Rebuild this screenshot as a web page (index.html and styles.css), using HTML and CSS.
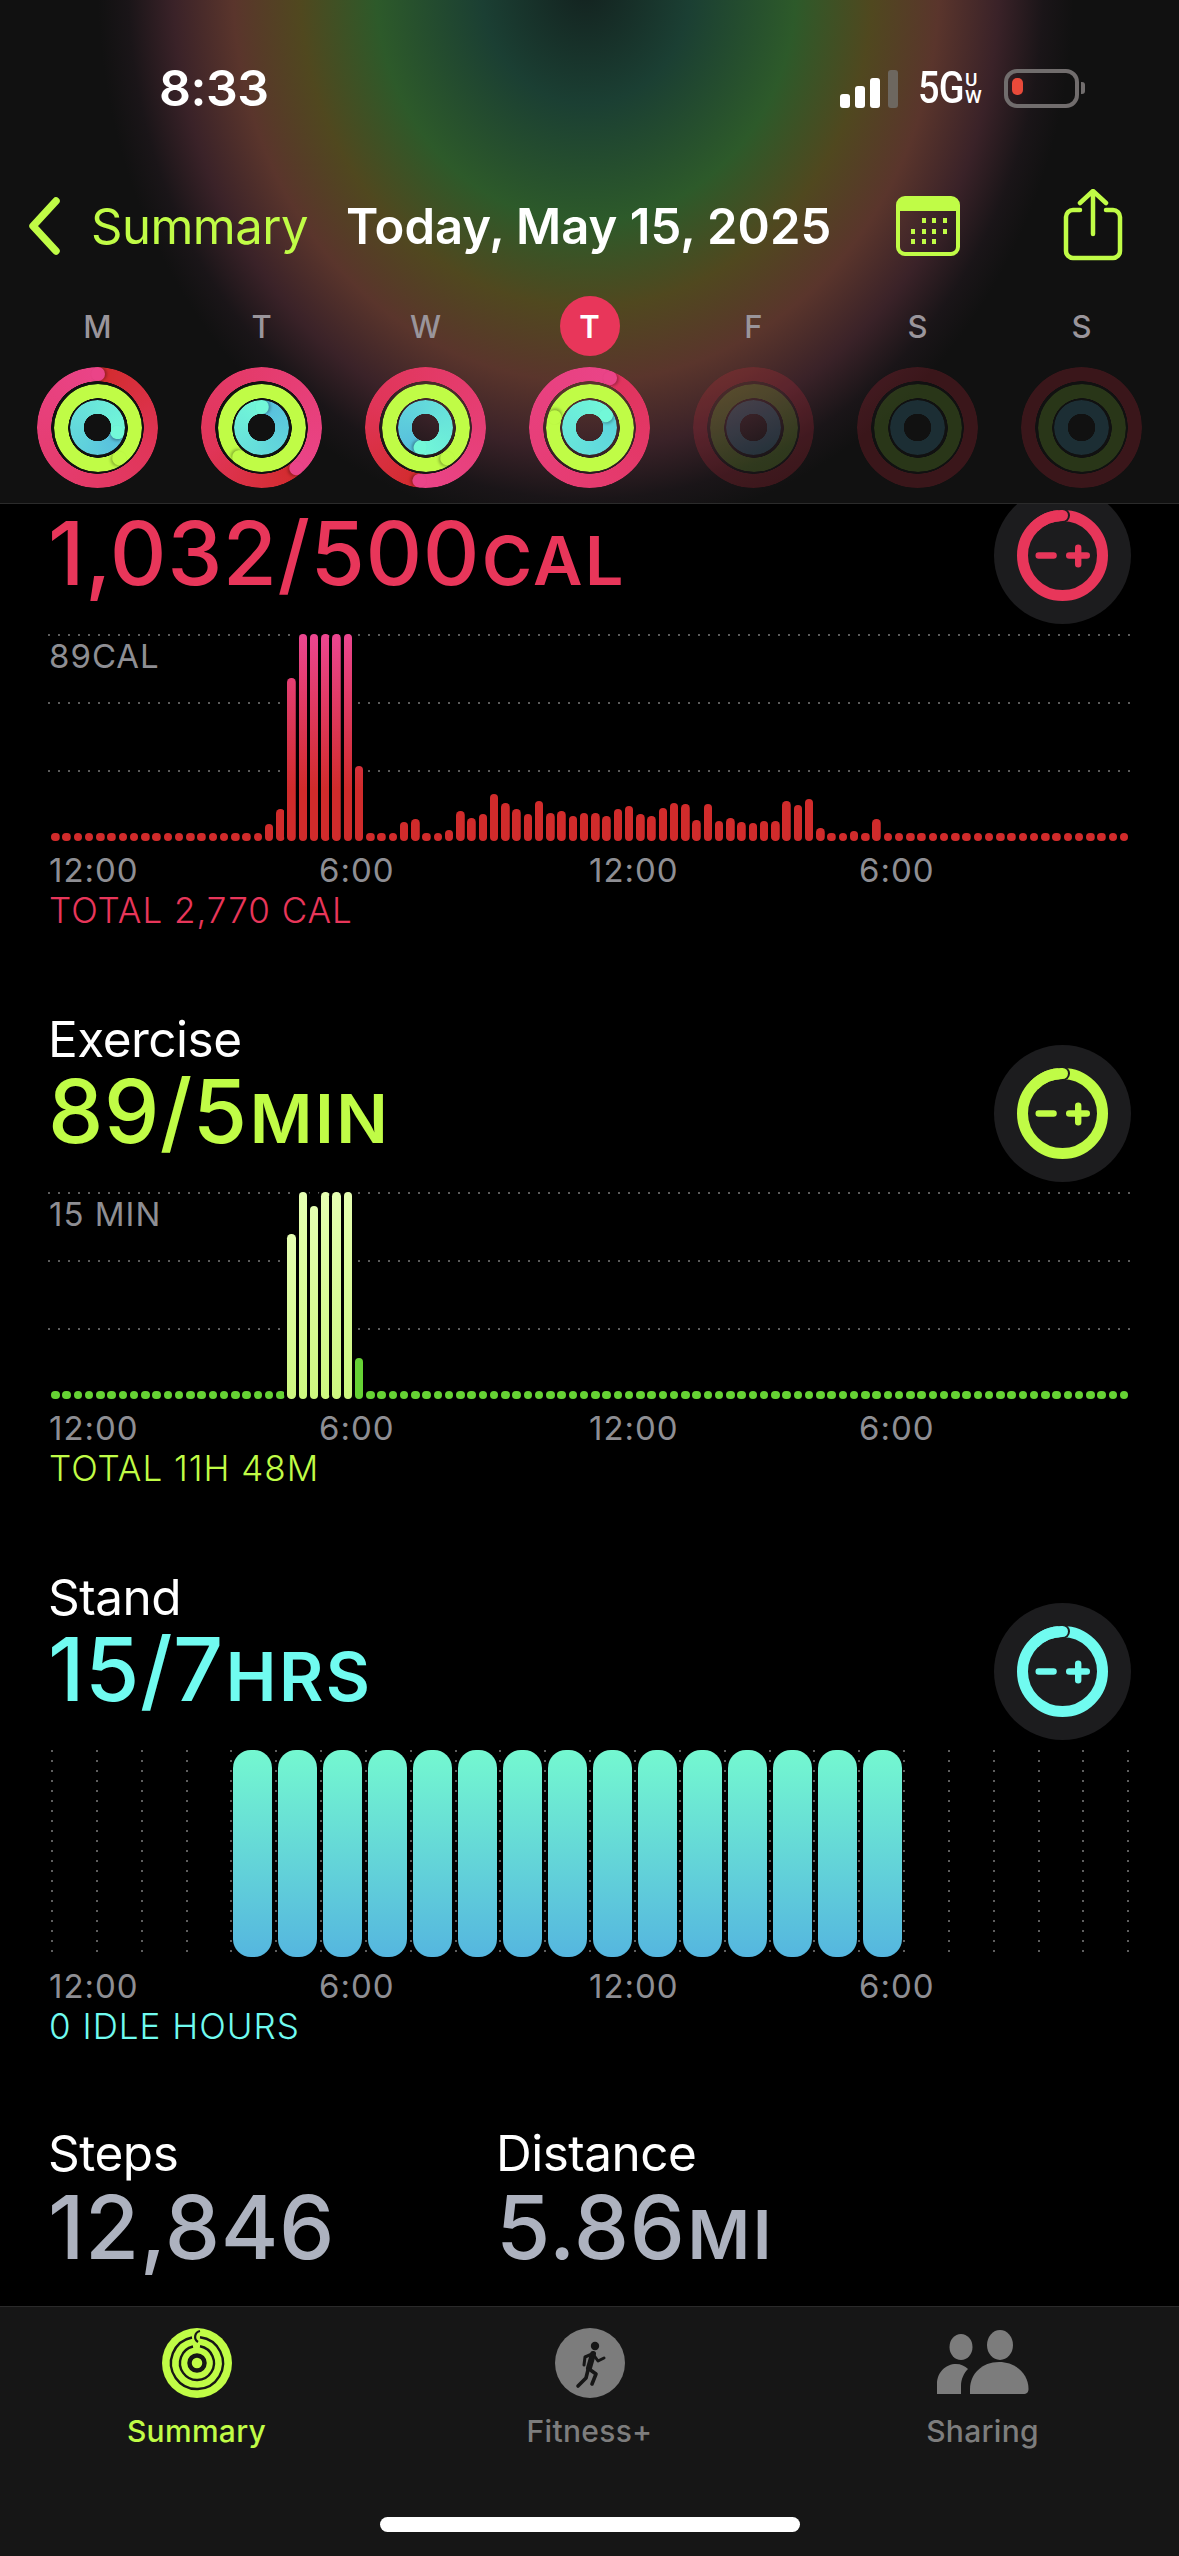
FILE: index.html
```html
<!DOCTYPE html>
<html lang="en">

<head>
    <meta charset="UTF-8">
    <meta name="viewport" content="width=device-width, initial-scale=1.0">
    <title>Activity Summary</title>
    <link rel="stylesheet" href="styles.css">
</head>

<body>
    <svg class="sprites" width="0" height="0">
        <symbol id="goal-button" viewBox="0 0 137 137">
            <circle cx="68.5" cy="68.5" r="68.5" fill="#1c1c1e" />
            <circle cx="68.5" cy="68.5" r="40" fill="none" stroke="currentColor" stroke-width="11" />
            <circle cx="69" cy="28.5" r="7" fill="#1c1c1e" />
            <path d="M40.2 40.3A40 40 0 0 1 68.5 28.5" fill="none" stroke="currentColor" stroke-width="11" />
            <circle cx="68.5" cy="28.5" r="5.5" fill="currentColor" />
            <path d="M44.7 68.5H59.6M75.2 68.5H92.8M84.2 60.7V77.3" fill="none" stroke="currentColor" stroke-width="6.4" stroke-linecap="round" />
        </symbol>
    </svg>

    <header class="top">
        <div class="status">
            <span class="time">8:33</span>
            <div class="status-icons">
                <div class="signal">
                    <i class="sig sig-1"></i>
                    <i class="sig sig-2"></i>
                    <i class="sig sig-3"></i>
                    <i class="sig sig-4"></i>
                </div>
                <div class="network">
                    <span class="net-5g">5G</span>
                    <span class="net-uw"><b>U</b><b>W</b></span>
                </div>
                <div class="battery"><i class="battery-level"></i></div>
                <i class="battery-nub"></i>
            </div>
        </div>

        <nav class="nav">
            <svg class="chevron" width="34" height="58" viewBox="0 0 34 58">
                <path d="M29 4L6 29L29 54" fill="none" stroke="#c0fc46" stroke-width="7.5" stroke-linecap="round" stroke-linejoin="round" />
            </svg>
            <span class="nav-back">Summary</span>
            <h1 class="nav-title">Today, May 15, 2025</h1>
            <svg class="calendar" width="64" height="60" viewBox="0 0 64 60">
                <rect x="2" y="2" width="60" height="56" rx="7" fill="none" stroke="#c0fc46" stroke-width="4" />
                <path d="M2 15V8a6 6 0 0 1 6-6H56a6 6 0 0 1 6 6V15Z" fill="#c0fc46" />
                <g fill="#c0fc46">
                    <rect x="26" y="22" width="4" height="5" /><rect x="36" y="22" width="4" height="5" /><rect x="47" y="22" width="4" height="5" />
                    <rect x="15" y="33" width="4" height="5" /><rect x="26" y="33" width="4" height="5" /><rect x="36" y="33" width="4" height="5" /><rect x="47" y="33" width="4" height="5" />
                    <rect x="15" y="43" width="4" height="5" /><rect x="26" y="43" width="4" height="5" /><rect x="36" y="43" width="4" height="5" />
                </g>
            </svg>
            <svg class="share" width="60" height="72" viewBox="0 0 60 72">
                <path d="M17 21H10a7 7 0 0 0-7 7V62a7 7 0 0 0 7 7H50a7 7 0 0 0 7-7V28a7 7 0 0 0-7-7H43" fill="none" stroke="#c0fc46" stroke-width="4.5" stroke-linecap="round" />
                <path d="M30 45V3M17 14L30 2L43 14" fill="none" stroke="#c0fc46" stroke-width="4.5" stroke-linecap="round" stroke-linejoin="round" />
            </svg>
        </nav>

        <div class="week" id="week"></div>
    </header>

    <main class="content">
        <div class="scroller">
            <section class="metric metric-move">
                <div class="metric-head">
                    <div>
                        <h2 class="metric-title metric-title-under">Move</h2>
                        <p class="metric-value">1,032/500<span class="unit">CAL</span></p>
                    </div>
                    <svg class="goal-button"><use href="#goal-button" /></svg>
                </div>
                <div class="chart">
                    <div class="gridlines"><i></i><i></i><i></i></div>
                    <div class="bars" id="move-bars"></div>
                    <span class="chart-max">89CAL</span>
                </div>
                <div class="axis"><span>12:00</span><span>6:00</span><span>12:00</span><span>6:00</span></div>
                <p class="metric-total">TOTAL 2,770 CAL</p>
            </section>

            <section class="metric metric-exercise">
                <div class="metric-head">
                    <div>
                        <h2 class="metric-title">Exercise</h2>
                        <p class="metric-value">89/5<span class="unit">MIN</span></p>
                    </div>
                    <svg class="goal-button"><use href="#goal-button" /></svg>
                </div>
                <div class="chart">
                    <div class="gridlines"><i></i><i></i><i></i></div>
                    <div class="bars" id="exercise-bars"></div>
                    <span class="chart-max">15 MIN</span>
                </div>
                <div class="axis"><span>12:00</span><span>6:00</span><span>12:00</span><span>6:00</span></div>
                <p class="metric-total">TOTAL 11H 48M</p>
            </section>

            <section class="metric metric-stand">
                <div class="metric-head">
                    <div>
                        <h2 class="metric-title">Stand</h2>
                        <p class="metric-value">15/7<span class="unit">HRS</span></p>
                    </div>
                    <svg class="goal-button"><use href="#goal-button" /></svg>
                </div>
                <div class="chart">
                    <div class="stand-lines" id="stand-lines"></div>
                    <div class="stand-bars" id="stand-bars"></div>
                </div>
                <div class="axis"><span>12:00</span><span>6:00</span><span>12:00</span><span>6:00</span></div>
                <p class="metric-total">0 IDLE HOURS</p>
            </section>

            <section class="extras">
                <div class="extra extra-steps">
                    <h2 class="metric-title">Steps</h2>
                    <p class="metric-value">12,846</p>
                </div>
                <div class="extra">
                    <h2 class="metric-title">Distance</h2>
                    <p class="metric-value">5.86<span class="unit">MI</span></p>
                </div>
            </section>
        </div>
    </main>

    <footer class="tabbar">
        <div class="tabs">
            <div class="tab tab-active">
                <svg class="tab-icon" width="70" height="70" viewBox="0 0 70 70">
                    <circle cx="35" cy="35" r="35" fill="#c0fc46" />
                    <g fill="none" stroke="#161616" stroke-width="2.4">
                        <path d="M38 9.2A26 26 0 1 1 30 9.5" />
                        <path d="M38 18.3A17 17 0 1 1 31 18.5" />
                    </g>
                    <circle cx="35" cy="35" r="7.5" fill="none" stroke="#161616" stroke-width="4.5" />
                    <path d="M38 3A6 6 0 0 0 36 14" fill="none" stroke="#161616" stroke-width="2.2" />
                </svg>
                <span class="tab-label">Summary</span>
            </div>
            <div class="tab">
                <svg class="tab-icon" width="70" height="70" viewBox="0 0 70 70">
                    <circle cx="35" cy="35" r="35" fill="#7c7c7c" />
                    <circle cx="40" cy="18" r="4.2" fill="#161616" />
                    <g fill="none" stroke="#161616" stroke-linecap="round" stroke-linejoin="round">
                        <path d="M38 26L34 40" stroke-width="6" />
                        <path d="M37 26L30 29L29 37" stroke-width="3" />
                        <path d="M38 26L43 33L49 30" stroke-width="3" />
                        <path d="M34 41L41 46L37 56" stroke-width="3.6" />
                        <path d="M33 42L31 50L23 58" stroke-width="3.6" />
                    </g>
                </svg>
                <span class="tab-label">Fitness+</span>
            </div>
            <div class="tab">
                <svg class="tab-icon" width="94" height="70" viewBox="0 0 94 70">
                    <g fill="#7c7c7c">
                        <ellipse cx="25" cy="19" rx="11.500" ry="13" />
                        <ellipse cx="64" cy="17" rx="13" ry="15" />
                        <path d="M1 66V56C1 44 10 36 20 36C25 36 29 38 32 41C28 45 25 51 25 58V66Z" />
                        <path d="M35 68H88C92 68 93.500 66 93.500 63C93.500 48 81 36 64 36C47 36 35 48 35 63Z" transform="translate(-1 -2)" />
                    </g>
                </svg>
                <span class="tab-label">Sharing</span>
            </div>
        </div>
        <div class="home-indicator"></div>
    </footer>

    <script src="charts.js"></script>
</body>

</html>
```

FILE: styles.css
```css
* {
    box-sizing: border-box;
}

body {
    font-family: 'Inter', 'Noto Sans', sans-serif;
    background-color: #000;
    color: #fff;
    margin: 0;
    padding: 0;
    width: 1179px;
    height: 2556px;
    display: flex;
    flex-direction: column;
    overflow: hidden;
}

h1,
h2,
p {
    margin: 0;
    font-weight: 400;
}

.sprites {
    position: absolute;
}

/* top area */

.top {
    flex: none;
    position: relative;
    z-index: 1;
    height: 504px;
    border-bottom: 1px solid #2b2b2b;
    background-color: #111;
    background-image: radial-gradient(488px 547px at 586px -14px,
            #13221f 0%,
            #1b3f33 21.5%,
            #2d5a2a 43%,
            #50481f 58.6%,
            #5a352c 72.3%,
            #3a2228 84.6%,
            #1a1518 93.8%,
            #111 100%);
}

.status {
    height: 176px;
    display: flex;
    justify-content: space-between;
    align-items: center;
    padding: 0 94px 0 159px;
}

.time {
    font-size: 50px;
    font-weight: 600;
    letter-spacing: -0.5px;
}

.status-icons {
    display: flex;
    align-items: center;
}

.signal {
    display: flex;
    align-items: flex-end;
    gap: 5px;
    height: 39px;
}

.sig {
    width: 10px;
    background: #fff;
    border-radius: 3px;
}

.sig-1 {
    height: 14px;
}

.sig-2 {
    height: 22px;
}

.sig-3 {
    height: 30px;
}

.sig-4 {
    height: 38px;
    margin-left: 3px;
    background: #6d675f;
}

.network {
    display: flex;
    align-items: center;
    margin-left: 20px;
    width: 66px;
}

.net-5g {
    font-family: 'Roboto', sans-serif;
    font-size: 44px;
    font-weight: 500;
    letter-spacing: -1px;
    transform: scaleX(0.86);
    transform-origin: left center;
    width: 47px;
}

.net-uw {
    display: flex;
    flex-direction: column;
    font-family: 'Roboto', sans-serif;
    font-size: 19px;
    line-height: 17px;
}

.net-uw b {
    font-weight: 500;
}

.battery {
    width: 75px;
    height: 39px;
    margin-left: 20px;
    padding: 7px 5px;
    border: 4px solid #716d6d;
    border-radius: 13px;
}

.battery-level {
    display: block;
    width: 11px;
    height: 100%;
    margin-top: -2px;
    margin-left: -1px;
    padding-bottom: 4px;
    background: #ea4a3a;
    border-radius: 5px;
}

.battery-nub {
    width: 4px;
    height: 12px;
    margin-left: 2px;
    background: #716d6d;
    border-radius: 0 3px 3px 0;
}

.nav {
    height: 100px;
    display: flex;
    align-items: center;
    padding-left: 27px;
}

.nav-back {
    font-size: 49px;
    color: #c0fc46;
    margin-left: 30px;
    letter-spacing: -0.5px;
}

.nav-title {
    font-size: 49px;
    font-weight: 600;
    margin-left: 38px;
    white-space: nowrap;
}

.calendar {
    margin-left: auto;
}

.share {
    margin-left: 103px;
    margin-right: 56px;
    margin-top: -2px;
}

.week {
    display: grid;
    grid-template-columns: repeat(7, 164px);
    justify-content: center;
    margin-top: 20px;
}

.day {
    display: flex;
    flex-direction: column;
    align-items: center;
    gap: 11px;
}

.day-letter {
    width: 60px;
    height: 60px;
    display: flex;
    align-items: center;
    justify-content: center;
    border-radius: 50%;
    font-size: 31px;
    font-weight: 500;
    color: #9a959b;
}

.day-today .day-letter {
    background: #e8365a;
    color: #fff;
    font-weight: 600;
}

.ring {
    display: grid;
    place-items: center;
    width: 121px;
    height: 121px;
}

.band {
    --hole: 46.500px;
    grid-area: 1 / 1;
    position: relative;
    border-radius: 50%;
    background: conic-gradient(from var(--angle), var(--from) 0%, var(--via) 30%, var(--to) 100%);
    -webkit-mask: radial-gradient(circle closest-side, transparent calc(var(--hole) - 0.5px), #000 var(--hole));
    mask: radial-gradient(circle closest-side, transparent calc(var(--hole) - 0.5px), #000 var(--hole));
}

.band-move {
    width: 121px;
    height: 121px;
    --hole: 46.500px;
    --from: #d22b2c;
    --via: #e03558;
    --to: #ea4488;
}

.band-exercise {
    width: 88px;
    height: 88px;
    --hole: 30px;
    --from: #c0fc46;
    --via: #c0fc46;
    --to: #c0fc46;
}

.band-stand {
    width: 55px;
    height: 55px;
    --hole: 14px;
    --from: #56bcdd;
    --via: #5fd0dc;
    --to: #72f8d8;
}

.day-today .band-move {
    --from: #e0335c;
    --via: #e4396a;
}

.day-today .band-stand {
    --from: #5cd4dc;
    --via: #62dcdc;
}

.cap-arm {
    position: absolute;
    inset: 0;
    transform: rotate(var(--angle));
}

.cap-arm::before {
    content: "";
    position: absolute;
    top: 0;
    left: 50%;
    width: var(--cap);
    height: var(--cap);
    margin-left: calc(var(--cap) / -2);
    border-radius: 50%;
    background: var(--to);
    box-shadow: 2px 0 3px rgba(0, 0, 0, 0.28);
}

.band-move .cap-arm {
    --cap: 14px;
}

.band-exercise .cap-arm {
    --cap: 14px;
}

.band-stand .cap-arm {
    --cap: 13.500px;
}

.day-future .band {
    background: none;
}

.day-future .band-move {
    background: rgba(226, 44, 66, 0.2);
}

.day-future .band-exercise {
    background: rgba(170, 250, 60, 0.16);
}

.day-future .band-stand {
    background: rgba(90, 200, 235, 0.16);
}

/* scrolled metrics */

.content {
    flex: 1;
    overflow: hidden;
}

.scroller {
    margin-top: -70px;
}

.metric {
    height: 558px;
    padding: 0 48px 0 48px;
}

.metric-head {
    display: flex;
    justify-content: space-between;
    align-items: flex-start;
    height: 200px;
    padding-top: 20px;
    position: relative;
}

.metric-title {
    font-size: 49.500px;
    line-height: 55px;
    letter-spacing: -0.5px;
}

.metric-title-under {
    visibility: hidden;
}

.metric-value {
    font-size: 88px;
    line-height: 88px;
    font-weight: 500;
    letter-spacing: 0.5px;
    white-space: nowrap;
}

.unit {
    font-size: 68px;
    font-weight: 600;
    margin-left: 2px;
    letter-spacing: 2.500px;
}

.goal-button {
    width: 137px;
    height: 137px;
    position: absolute;
    right: 0;
    top: 53px;
}

.metric-move .metric-value,
.metric-move .metric-total,
.metric-move .goal-button {
    color: #e8365a;
}

.metric-exercise .metric-value,
.metric-exercise .metric-total,
.metric-exercise .goal-button {
    color: #c0fc46;
}

.metric-stand .metric-value,
.metric-stand .metric-total,
.metric-stand .goal-button {
    color: #70fbf0;
}

.chart {
    position: relative;
    height: 207px;
}

.gridlines {
    display: flex;
    flex-direction: column;
}

.gridlines i {
    display: block;
    height: 68px;
    background: linear-gradient(90deg, #5c5c5c 2px, transparent 2px) 0 0 / 10px 2px repeat-x;
}

.bars {
    position: absolute;
    inset: 0 auto 0 3px;
    display: grid;
    grid-template-columns: repeat(96, 11.25px);
    align-items: end;
}

.bar {
    width: 8.500px;
    border-radius: 4.250px;
    background-color: #d42b2d;
}

.metric-move .bar {
    background: linear-gradient(#ec4690, #d12b2b 75%, #d12b2b) bottom / 100% 207px no-repeat;
}

.bar-tall {
    box-shadow: 0 0 0 3px #000;
}

.metric-exercise .bar {
    background: #66d234;
}

.metric-exercise .bar-tall {
    background: linear-gradient(#e6ffb2, #cdf77f);
}

.chart-max {
    position: absolute;
    left: 1px;
    top: 2px;
    font-size: 33px;
    line-height: 40px;
    letter-spacing: 1px;
    color: #8e8e93;
}

.axis {
    display: grid;
    grid-template-columns: repeat(4, 270px);
    font-size: 33px;
    line-height: 40px;
    letter-spacing: 1px;
    color: #8e8e93;
    padding-left: 1px;
    margin-top: 9px;
}

.metric-total {
    font-size: 35px;
    line-height: 40px;
    letter-spacing: 1px;
    padding-left: 1px;
    font-weight: 300;
}

.stand-lines {
    position: absolute;
    inset: 0 auto 0 3px;
    height: 205px;
    display: flex;
    gap: 42.850px;
}

.stand-line {
    width: 2px;
    height: 100%;
    background: linear-gradient(#5e5e5e 2px, transparent 2px) 0 0 / 2px 10px repeat-y;
}

.stand-bars {
    position: absolute;
    inset: 0 auto 0 185px;
    display: flex;
    gap: 6px;
}

.stand-bar {
    width: 39px;
    height: 207px;
    border-radius: 18px;
    background: linear-gradient(#74f8d0, #55b6df);
}

.extras {
    display: flex;
    padding: 0 48px;
    margin-top: 18px;
}

.extra-steps {
    width: 448px;
}

.extras .metric-value {
    color: #adb2bf;
    margin-top: 2px;
}

/* tab bar */

.tabbar {
    flex: none;
    position: relative;
    z-index: 1;
    height: 250px;
    background: #161616;
    border-top: 1px solid #2a2a2a;
    display: flex;
    flex-direction: column;
    align-items: center;
}

.tabs {
    display: grid;
    grid-template-columns: repeat(3, 393px);
    width: 100%;
    padding-top: 21px;
}

.tab {
    display: flex;
    flex-direction: column;
    align-items: center;
    gap: 15px;
    color: #7d7d7d;
}

.tab-active {
    color: #c0fc46;
}

.tab-label {
    font-size: 30px;
    font-weight: 500;
    line-height: 36px;
    letter-spacing: 0.3px;
}

.home-indicator {
    width: 420px;
    height: 15px;
    margin-top: 68px;
    background: #fff;
    border-radius: 8px;
}
```

FILE: charts.js
```js
const WEEK = [
    { letter: 'M', angles: [0, 145, 104] },
    { letter: 'T', angles: [139, 218, 2] },
    { letter: 'W', angles: [186, 145, 195] },
    { letter: 'T', angles: [22, 287, 54], today: true },
    { letter: 'F', future: true },
    { letter: 'S', future: true },
    { letter: 'S', future: true }
];

const RING_NAMES = ['move', 'exercise', 'stand'];

// heights in px, any 15 minute slot not listed is a plain dot
const MOVE_BARS = {
    19: 17, 20: 32, 21: 163, 22: 207, 23: 207, 24: 207, 25: 207, 26: 207, 27: 75,
    31: 19, 32: 22, 35: 11, 36: 30, 37: 23, 38: 27, 39: 47, 40: 38, 41: 32, 42: 27,
    43: 40, 44: 28, 45: 30, 46: 25, 47: 28, 48: 28, 49: 25, 50: 32, 51: 35, 52: 27,
    53: 25, 54: 33, 55: 38, 56: 37, 57: 21, 58: 37, 59: 20, 60: 23, 61: 19, 62: 18,
    63: 20, 64: 20, 65: 40, 66: 36, 67: 42, 68: 13, 71: 10, 73: 22
};

const EXERCISE_BARS = {
    21: 165, 22: 207, 23: 193, 24: 207, 25: 207, 26: 207, 27: 41
};

function buildWeek() {
    const week = document.getElementById('week');

    WEEK.forEach(function (day) {
        const el = document.createElement('div');
        el.className = 'day';
        if (day.today) el.classList.add('day-today');
        if (day.future) el.classList.add('day-future');

        const letter = document.createElement('span');
        letter.className = 'day-letter';
        letter.textContent = day.letter;
        el.appendChild(letter);

        const ring = document.createElement('div');
        ring.className = 'ring';
        RING_NAMES.forEach(function (name, i) {
            const band = document.createElement('div');
            band.className = 'band band-' + name;
            if (day.angles) {
                band.style.setProperty('--angle', day.angles[i] + 'deg');
                const arm = document.createElement('div');
                arm.className = 'cap-arm';
                band.appendChild(arm);
            }
            ring.appendChild(band);
        });
        el.appendChild(ring);
        week.appendChild(el);
    });
}

function buildBars(id, heights) {
    const box = document.getElementById(id);

    for (let i = 0; i < 96; i++) {
        const bar = document.createElement('div');
        const height = heights[i] || 8.5;
        bar.className = 'bar';
        if (height > 60) bar.classList.add('bar-tall');
        bar.style.height = height + 'px';
        box.appendChild(bar);
    }
}

function buildStand() {
    const lines = document.getElementById('stand-lines');
    const bars = document.getElementById('stand-bars');

    for (let i = 0; i < 25; i++) {
        const line = document.createElement('div');
        line.className = 'stand-line';
        lines.appendChild(line);
    }
    for (let i = 0; i < 15; i++) {
        const bar = document.createElement('div');
        bar.className = 'stand-bar';
        bars.appendChild(bar);
    }
}

buildWeek();
buildBars('move-bars', MOVE_BARS);
buildBars('exercise-bars', EXERCISE_BARS);
buildStand();
```
